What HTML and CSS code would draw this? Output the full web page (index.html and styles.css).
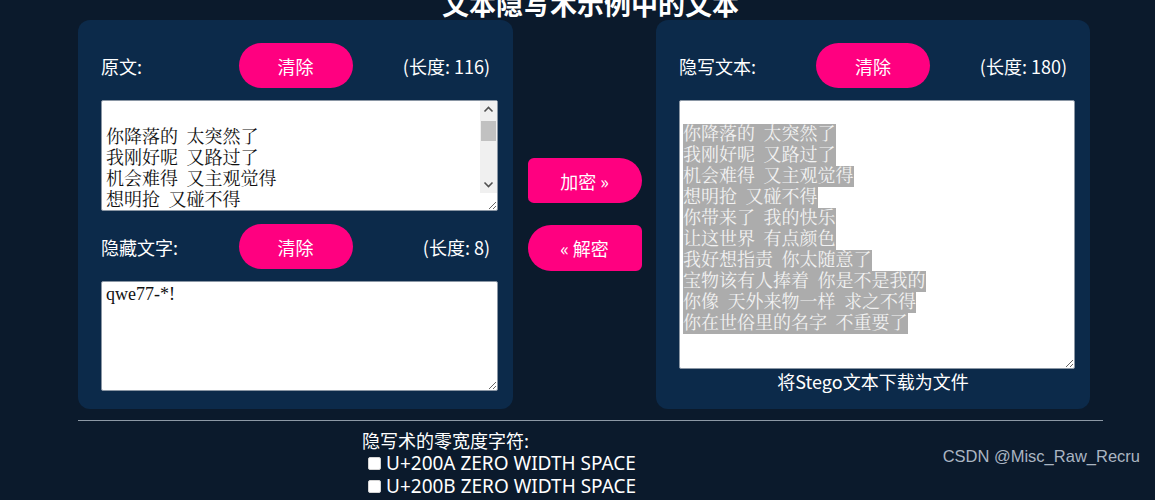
FILE: index.html
```html
<!DOCTYPE html>
<html lang="zh">
<head>
<meta charset="utf-8">
<title>文本隐写术示例中的文本</title>
<link rel="stylesheet" href="styles.css">
</head>
<body>
<div class="page">
  <h1 class="title">文本隐写术示例中的文本</h1>
  <div class="workspace">
    <section class="panel">
      <div class="head">
        <span class="label">原文:</span>
        <button class="clear">清除</button>
        <span class="len">(长度: 116)</span>
      </div>
      <div class="tawrap">
        <textarea class="ta ta-plain">

你降落的 太突然了
我刚好呢 又路过了
机会难得 又主观觉得
想明抢 又碰不得
你带来了 我的快乐
让这世界 有点颜色
我好想指责 你太随意了
宝物该有人捧着 你是不是我的
你像 天外来物一样 求之不得
你在世俗里的名字 不重要了</textarea>
        <div class="fakebar">
          <div class="sb-btn"><svg width="17" height="17" viewBox="0 0 17 17"><path d="M4.5 10.5 L8.5 6.5 L12.5 10.5" fill="none" stroke="#505050" stroke-width="1.6"/></svg></div>
          <div class="sb-track"><div class="sb-thumb"></div></div>
          <div class="sb-btn"><svg width="17" height="17" viewBox="0 0 17 17"><path d="M4.5 6.5 L8.5 10.5 L12.5 6.5" fill="none" stroke="#505050" stroke-width="1.6"/></svg></div>
        </div>
      </div>
      <div class="head head2">
        <span class="label">隐藏文字:</span>
        <button class="clear">清除</button>
        <span class="len">(长度: 8)</span>
      </div>
      <textarea class="ta ta-secret">qwe77-*!</textarea>
    </section>

    <div class="actions">
      <button class="act act-enc">加密 »</button>
      <button class="act act-dec">« 解密</button>
    </div>

    <section class="panel panel-right">
      <div class="head">
        <span class="label">隐写文本:</span>
        <button class="clear">清除</button>
        <span class="len">(长度: 180)</span>
      </div>
      <div class="ta stego"><br><span class="sel">你降落的 太突然了</span><br><span class="sel">我刚好呢 又路过了</span><br><span class="sel">机会难得 又主观觉得</span><br><span class="sel">想明抢 又碰不得</span><br><span class="sel">你带来了 我的快乐</span><br><span class="sel">让这世界 有点颜色</span><br><span class="sel">我好想指责 你太随意了</span><br><span class="sel">宝物该有人捧着 你是不是我的</span><br><span class="sel">你像 天外来物一样 求之不得</span><br><span class="sel">你在世俗里的名字 不重要了</span></div>
      <div class="download">将Stego文本下载为文件</div>
    </section>
  </div>

  <hr class="rule">

  <div class="chars">
    <div class="chars-title">隐写术的零宽度字符:</div>
    <label class="opt"><input type="checkbox" class="cb">U+200A ZERO WIDTH SPACE</label>
    <label class="opt"><input type="checkbox" class="cb">U+200B ZERO WIDTH SPACE</label>
  </div>
</div>
<div class="watermark">CSDN @Misc_Raw_Recru</div>
</body>
</html>
```

FILE: styles.css
```css
html, body {
  margin: 0;
  padding: 0;
  background: #0b1a2c;
  height: 100%;
  overflow: hidden;
}
body {
  font-family: "Noto Sans CJK SC", "Noto Sans", sans-serif;
  color: #ffffff;
  position: relative;
}
.page {
  width: 1025px;
  margin-left: 78px;
}
.title {
  margin: -11px 0 1px 0;
  height: 30px;
  line-height: 30px;
  font-size: 27px;
  font-weight: 700;
  text-align: center;
}
.workspace {
  display: flex;
  align-items: stretch;
}
.panel {
  width: 435px;
  box-sizing: border-box;
  background: #0c2a4a;
  border-radius: 12px;
  padding: 23px 15px 16px 23px;
}
.panel-right {
  width: 434px;
}
.head {
  display: grid;
  grid-template-columns: 1fr auto 1fr;
  align-items: center;
  height: 45px;
  margin-right: 8px;
  font-size: 18px;
}
.head2 {
  margin-top: 13px;
}
.len {
  justify-self: end;
}
.clear {
  width: 114px;
  height: 45px;
  border: none;
  border-radius: 23px;
  background: #ff0080;
  color: #fff;
  font-family: "Noto Sans CJK SC", sans-serif;
  font-size: 18px;
  padding: 0;
}
.ta {
  display: block;
  box-sizing: border-box;
  width: 100%;
  margin: 12px 0 0 0;
  background: #fff;
  color: #111;
  border: 1px solid #8a96a4;
  border-radius: 2px;
  font-family: "Liberation Serif", "Noto Serif CJK SC", "Noto Sans CJK SC", serif;
  font-size: 18px;
  line-height: 21px;
  word-spacing: 4px;
  padding: 2px 20px 2px 4px;
  overflow: hidden;
  resize: both;
  outline: none;
}
.tawrap {
  position: relative;
  margin-top: 12px;
}
.tawrap .ta {
  margin-top: 0;
}
.ta-plain {
  height: 111px;
  padding-top: 5px;
}
.ta-secret {
  height: 110px;
}
.fakebar {
  position: absolute;
  top: 1px;
  right: 1px;
  width: 17px;
  height: 92px;
  background: #f0f0f0;
  display: flex;
  flex-direction: column;
}
.sb-btn {
  height: 17px;
  display: flex;
}
.sb-track {
  flex: 1;
  padding-top: 3px;
}
.sb-thumb {
  height: 20px;
  margin: 0 1px;
  background: #c1c1c1;
}
.stego {
  height: 269px;
  width: 396px;
  padding-right: 4px;
  padding-left: 3px;
}
.sel {
  background: #acacac;
  color: #f2f2f2;
  display: inline-block;
  line-height: 21px;
}
.download {
  text-align: center;
  font-size: 18px;
  line-height: 24px;
  margin-right: 8px;
}
.actions {
  width: 143px;
  display: flex;
  flex-direction: column;
  align-items: center;
  justify-content: center;
  gap: 22px;
}
.act {
  width: 114px;
  height: 45px;
  border: none;
  background: #ff0080;
  color: #fff;
  font-family: "Noto Sans CJK SC", sans-serif;
  font-size: 18px;
  padding: 0;
}
.act-enc {
  border-radius: 6px 23px 23px 6px;
}
.act-dec {
  height: 46px;
  border-radius: 23px 6px 6px 23px;
}
.rule {
  margin: 11px 0 0 0;
  border: none;
  height: 1px;
  background: #8d99a6;
}
.chars {
  margin-left: 284px;
  margin-top: 8px;
  font-size: 18px;
  line-height: 23px;
}
.opt {
  display: flex;
  align-items: center;
  height: 23px;
  font-family: "Noto Sans", "DejaVu Sans", sans-serif;
  font-size: 19px;
  line-height: 23px;
}
.cb {
  appearance: none;
  -webkit-appearance: none;
  width: 13px;
  height: 13px;
  margin: 0 5px 0 6px;
  background: #fff;
  border: 1px solid #d4d4d4;
  border-radius: 2px;
  box-sizing: border-box;
}
.watermark {
  position: absolute;
  right: 15px;
  top: 447px;
  font-family: "Liberation Sans", Arial, sans-serif;
  font-size: 16.5px;
  color: #aab5c2;
}
```
